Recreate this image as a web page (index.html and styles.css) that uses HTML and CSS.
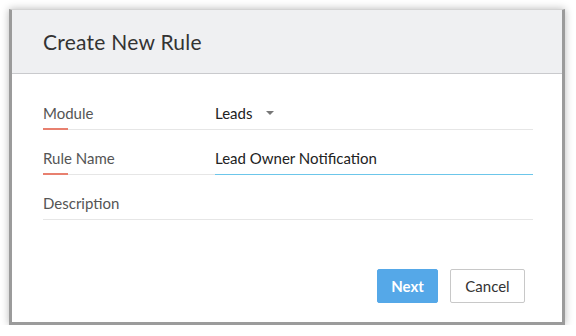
FILE: index.html
```html
<!DOCTYPE html>
<html>
<head>
<meta charset="utf-8">
<link rel="stylesheet" href="styles.css">
</head>
<body>
<div class="frame">
  <div class="header">
    <h1 class="title">Create New Rule</h1>
  </div>
  <div class="body">
    <div class="row">
      <div class="label">Module</div>
      <div class="value select">Leads <span class="caret"></span></div>
    </div>
    <div class="row">
      <div class="label">Rule Name</div>
      <div class="value input">Lead Owner Notification</div>
    </div>
    <div class="row">
      <div class="label plain">Description</div>
      <div class="value"></div>
    </div>
    <div class="footer">
      <button class="btn primary">Next</button>
      <button class="btn secondary">Cancel</button>
    </div>
  </div>
</div>
</body>
</html>
```
FILE: styles.css
```css
html, body {
  margin: 0;
  padding: 0;
  background: #ffffff;
  font-family: "Lato", "Open Sans", sans-serif;
}

.frame {
  margin: 9px 0 0 9px;
  width: 550px;
  height: 312px;
  background: #ffffff;
  border-top: 1px solid #d4d4d4;
  border-left: 3px solid #9b9b9b;
  border-right: 3px solid #9b9b9b;
  border-bottom: 3px solid #9b9b9b;
  box-shadow: 0 0 8px rgba(0, 0, 0, 0.28);
  display: flex;
  flex-direction: column;
}

.header {
  height: 63px;
  background: #eff0f2;
  border-bottom: 1px solid #c9cacd;
  display: flex;
  align-items: center;
  padding-left: 31px;
}

.title {
  margin: 0;
  font-size: 21px;
  font-weight: 400;
  color: #333333;
  letter-spacing: 0.25px;
}

.body {
  padding: 11px 29px 0 31px;
  display: flex;
  flex-direction: column;
}

.row {
  height: 44px;
  display: flex;
  align-items: flex-end;
  border-bottom: 1px solid #e6e6e6;
}

.label {
  width: 172px;
  font-size: 15px;
  line-height: 18px;
  color: #555555;
  margin-bottom: -1px;
}

.label::after {
  content: "";
  display: block;
  width: 25px;
  height: 2px;
  margin-top: 6px;
  background: #e8806f;
}

.label.plain::after {
  background: transparent;
}

.value {
  flex: 1;
  font-size: 15px;
  line-height: 18px;
  color: #222222;
  padding-bottom: 7px;
  display: flex;
  align-items: center;
}

.value.input {
  border-bottom: 1px solid #6cc6ea;
  margin-bottom: -1px;
}

.caret {
  display: inline-block;
  width: 0;
  height: 0;
  margin-left: 14px;
  border-left: 4.5px solid transparent;
  border-right: 4.5px solid transparent;
  border-top: 4.5px solid #777777;
}

.footer {
  display: flex;
  justify-content: flex-end;
  gap: 12px;
  margin-top: 49px;
  padding-right: 8px;
}

.btn {
  height: 34px;
  font-family: "Lato", "Open Sans", sans-serif;
  font-size: 15px;
  border-radius: 2px;
  padding: 0;
  cursor: pointer;
}

.primary {
  width: 61px;
  background: #55a8e8;
  border: 1px solid #55a8e8;
  color: #ffffff;
  font-weight: 700;
}

.secondary {
  width: 75px;
  background: #ffffff;
  border: 1px solid #c8c8c8;
  color: #333333;
}
```
